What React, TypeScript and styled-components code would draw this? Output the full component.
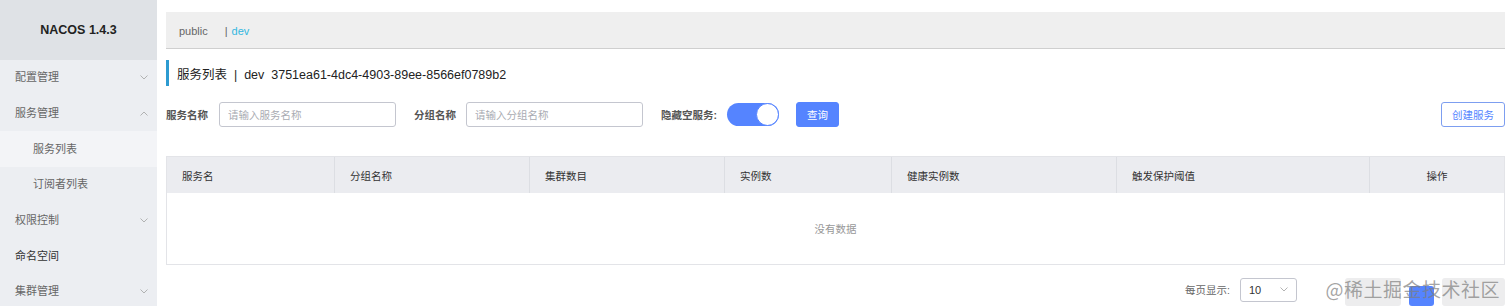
import React from 'react';
import styled, { createGlobalStyle } from 'styled-components';

const GlobalStyle = createGlobalStyle`
  html, body {
    margin: 0;
    padding: 0;
    background: #fff;
    font-family: "Liberation Sans", Arial, "Noto Sans CJK SC", sans-serif;
    color: #333;
  }
  * { box-sizing: border-box; }
`;

const Layout = styled.div`
  display: flex;
  width: 1512px;
  height: 306px;
  overflow: hidden;
`;

const Sidebar = styled.aside`
  width: 157px;
  flex-shrink: 0;
  background: #eceef2;
  display: flex;
  flex-direction: column;
`;

const Brand = styled.div`
  height: 60px;
  flex-shrink: 0;
  background: #dfe2e6;
  display: flex;
  align-items: center;
  justify-content: center;
  font-size: 12.5px;
  font-weight: 700;
  color: #222;
`;

const MenuItem = styled.div<{ $sub?: boolean; $active?: boolean; $strong?: boolean }>`
  height: 35.7px;
  flex-shrink: 0;
  display: flex;
  align-items: center;
  justify-content: space-between;
  padding: 0 9px 0 ${p => (p.$sub ? 33 : 15)}px;
  font-size: 11px;
  line-height: 1;
  color: ${p => (p.$strong ? '#333' : '#666')};
  background: ${p => (p.$active ? '#f3f4f7' : 'transparent')};
`;

const Main = styled.main`
  flex: 1;
  padding: 12px 7px 0 9px;
  display: flex;
  flex-direction: column;
  > * { flex-shrink: 0; }
`;

const NsBar = styled.div`
  height: 37px;
  background: #efefef;
  border-bottom: 1px solid #cfcfcf;
  display: flex;
  align-items: center;
  padding: 2px 13px 0;
  font-size: 11px;
  color: #666;
`;

const NsLink = styled.span<{ $active?: boolean }>`
  color: ${p => (p.$active ? '#33b7e0' : '#666')};
`;

const NsSep = styled.span`
  margin: 0 4px 0 17px;
  color: #666;
`;

const Title = styled.div`
  margin-top: 11px;
  height: 26px;
  border-left: 3px solid #2d9bd1;
  padding-left: 8px;
  display: flex;
  align-items: center;
  font-size: 12.5px;
  color: #222;
  white-space: pre;
`;

const SearchRow = styled.div`
  margin-top: 16px;
  height: 25px;
  display: flex;
  align-items: center;
`;

const Label = styled.span<{ $gap: number }>`
  font-size: 10.5px;
  font-weight: 700;
  color: #555;
  margin-right: ${p => p.$gap}px;
`;

const Input = styled.input<{ $after: number }>`
  width: 177px;
  height: 25px;
  border: 1px solid #c4c6cf;
  border-radius: 3px;
  padding: 0 8px;
  font-size: 10.5px;
  font-family: inherit;
  margin-right: ${p => p.$after}px;
  outline: none;
  &::placeholder { color: #a9abb2; }
`;

const Switch = styled.div`
  width: 52px;
  height: 23px;
  border-radius: 12px;
  background: #5584ff;
  display: flex;
  align-items: center;
  justify-content: flex-end;
  margin-right: 17px;
`;

const Knob = styled.div`
  width: 23px;
  height: 23px;
  border-radius: 50%;
  background: #fff;
  border: 1px solid #5584ff;
`;

const Button = styled.button<{ $primary?: boolean }>`
  height: 25px;
  padding: 0 10px;
  border-radius: 3px;
  font-size: 10.5px;
  font-family: inherit;
  border: 1px solid ${p => (p.$primary ? '#5584ff' : '#7d9ef0')};
  background: ${p => (p.$primary ? '#5584ff' : '#fff')};
  color: ${p => (p.$primary ? '#fff' : '#5584ff')};
  cursor: pointer;
`;

const Spacer = styled.div`
  flex: 1;
`;

const Table = styled.div`
  margin-top: 29px;
  border: 1px solid #e3e4e8;
`;

const HeadRow = styled.div`
  display: grid;
  grid-template-columns: 167px 195px 195px 167px 225px 253px 1fr;
  height: 36px;
  background: #ebecf0;
`;

const HeadCell = styled.div<{ $center?: boolean }>`
  display: flex;
  align-items: center;
  justify-content: ${p => (p.$center ? 'center' : 'flex-start')};
  padding: 0 15px;
  font-size: 10.5px;
  color: #333;
  & + & { border-left: 1px solid #dcdee3; }
`;

const Empty = styled.div`
  height: 71px;
  display: flex;
  align-items: center;
  justify-content: center;
  font-size: 10.5px;
  color: #999;
  background: #fff;
`;

const Pager = styled.div`
  margin-top: 12px;
  height: 25px;
  display: flex;
  align-items: center;
  justify-content: flex-end;
  position: relative;
`;

const PagerLabel = styled.span`
  font-size: 10.5px;
  color: #666;
  margin-right: 10px;
`;

const Select = styled.div`
  width: 57px;
  height: 24px;
  border: 1px solid #c4c6cf;
  border-radius: 3px;
  display: flex;
  align-items: center;
  justify-content: space-between;
  padding: 0 8px;
  font-size: 11px;
  color: #333;
  margin-right: 40px;
`;

const PageBtn = styled.div<{ $w: number; $current?: boolean }>`
  width: ${p => p.$w}px;
  height: ${p => (p.$current ? 20 : 28)}px;
  margin-left: 8px;
  align-self: flex-end;
  margin-bottom: -4px;
  border-radius: 3px;
  background: ${p => (p.$current ? '#5584ff' : '#ededee')};
`;

const Watermark = styled.div`
  position: absolute;
  right: 5px;
  top: -1px;
  font-size: 19px;
  color: rgba(125, 125, 125, 0.7);
  letter-spacing: 0.5px;
  pointer-events: none;
  font-family: "Noto Sans CJK SC", sans-serif;
  line-height: 25px;
`;

const Chevron = ({ up }: { up?: boolean }) => (
  <svg width="8" height="5" viewBox="0 0 8 5" fill="none">
    <path d={up ? 'M0.5 4.5 L4 1 L7.5 4.5' : 'M0.5 0.5 L4 4 L7.5 0.5'} stroke="#aaa" strokeWidth="0.9" />
  </svg>
);

const columns = ['服务名', '分组名称', '集群数目', '实例数', '健康实例数', '触发保护阈值', '操作'];

export default function App() {
  return (
    <>
      <GlobalStyle />
      <Layout>
        <Sidebar>
          <Brand>NACOS 1.4.3</Brand>
          <MenuItem>配置管理<Chevron /></MenuItem>
          <MenuItem>服务管理<Chevron up /></MenuItem>
          <MenuItem $sub $active>服务列表</MenuItem>
          <MenuItem $sub>订阅者列表</MenuItem>
          <MenuItem>权限控制<Chevron /></MenuItem>
          <MenuItem $strong>命名空间</MenuItem>
          <MenuItem>集群管理<Chevron /></MenuItem>
        </Sidebar>
        <Main>
          <NsBar>
            <NsLink>public</NsLink>
            <NsSep>|</NsSep>
            <NsLink $active>dev</NsLink>
          </NsBar>
          <Title>{'服务列表  |  dev  3751ea61-4dc4-4903-89ee-8566ef0789b2'}</Title>
          <SearchRow>
            <Label $gap={11}>服务名称</Label>
            <Input $after={18} placeholder="请输入服务名称" />
            <Label $gap={10}>分组名称</Label>
            <Input $after={18} placeholder="请输入分组名称" />
            <Label $gap={10}>隐藏空服务:</Label>
            <Switch><Knob /></Switch>
            <Button $primary>查询</Button>
            <Spacer />
            <Button>创建服务</Button>
          </SearchRow>
          <Table>
            <HeadRow>
              {columns.map((c, i) => (
                <HeadCell key={c} $center={i === columns.length - 1}>{c}</HeadCell>
              ))}
            </HeadRow>
            <Empty>没有数据</Empty>
          </Table>
          <Pager>
            <PagerLabel>每页显示:</PagerLabel>
            <Select>
              10
              <Chevron />
            </Select>
            <PageBtn $w={56} />
            <PageBtn $w={25} $current />
            <PageBtn $w={63} />
            <Watermark>@稀土掘金技术社区</Watermark>
          </Pager>
        </Main>
      </Layout>
    </>
  );
}
